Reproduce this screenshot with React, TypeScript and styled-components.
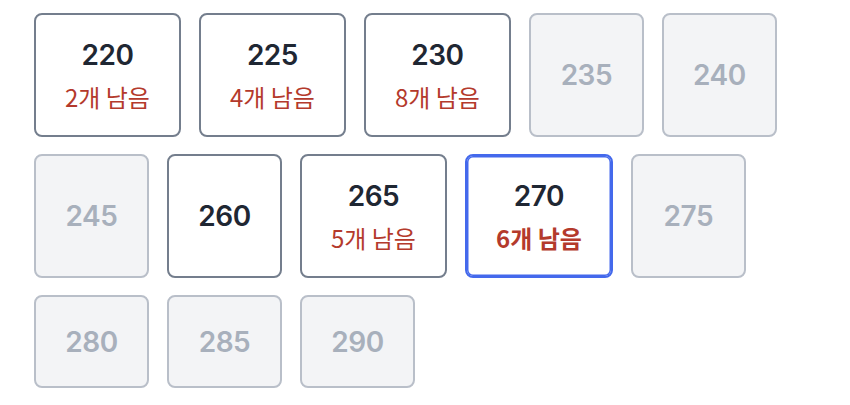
import React, { useState } from 'react';
import styled, { createGlobalStyle, css } from 'styled-components';

const GlobalStyle = createGlobalStyle`
  body {
    margin: 0;
    background: #ffffff;
    font-family: Inter, "Noto Sans CJK KR", sans-serif;
  }
`;

const Grid = styled.div`
  display: flex;
  flex-wrap: wrap;
  gap: 17px 18px;
  padding: 13px 34px;
`;

const SizeButton = styled.button<{ $selected?: boolean; $soldOut?: boolean }>`
  box-sizing: border-box;
  display: flex;
  flex-direction: column;
  align-items: center;
  justify-content: center;
  min-width: 115px;
  min-height: 93px;
  padding: 22px 29px;
  border: 2px solid #747e8d;
  border-radius: 8px;
  background: #ffffff;
  font-family: inherit;
  cursor: pointer;

  ${(props) =>
    props.$soldOut &&
    css`
      border-color: #b9bfc9;
      background: #f3f4f6;
      cursor: default;
    `}

  ${(props) =>
    props.$selected &&
    css`
      border-color: #4469ec;
      box-shadow: inset 0 0 0 1.5px #4469ec;
    `}
`;

const SizeLabel = styled.span<{ $soldOut?: boolean }>`
  font-family: Inter, sans-serif;
  font-size: 28px;
  font-weight: 600;
  line-height: 36px;
  letter-spacing: -0.5px;
  color: ${(props) => (props.$soldOut ? '#a8b0bc' : '#1f2733')};
`;

const Stock = styled.span<{ $bold?: boolean }>`
  margin-top: 8px;
  font-family: "Noto Sans CJK KR", sans-serif;
  font-size: 24px;
  line-height: 32px;
  font-weight: ${(props) => (props.$bold ? 700 : 400)};
  color: #b43a2c;
  white-space: nowrap;
`;

type Size = { size: number; left?: number; soldOut?: boolean };

const sizes: Size[] = [
  { size: 220, left: 2 },
  { size: 225, left: 4 },
  { size: 230, left: 8 },
  { size: 235, soldOut: true },
  { size: 240, soldOut: true },
  { size: 245, soldOut: true },
  { size: 260 },
  { size: 265, left: 5 },
  { size: 270, left: 6 },
  { size: 275, soldOut: true },
  { size: 280, soldOut: true },
  { size: 285, soldOut: true },
  { size: 290, soldOut: true },
];

const App = () => {
  const [selected, setSelected] = useState(270);

  return (
    <>
      <GlobalStyle />
      <Grid>
        {sizes.map((item) => (
          <SizeButton
            key={item.size}
            $soldOut={item.soldOut}
            $selected={selected === item.size}
            disabled={item.soldOut}
            onClick={() => setSelected(item.size)}
          >
            <SizeLabel $soldOut={item.soldOut}>{item.size}</SizeLabel>
            {item.left !== undefined && (
              <Stock $bold={selected === item.size}>{item.left}개 남음</Stock>
            )}
          </SizeButton>
        ))}
      </Grid>
    </>
  );
};

export default App;
